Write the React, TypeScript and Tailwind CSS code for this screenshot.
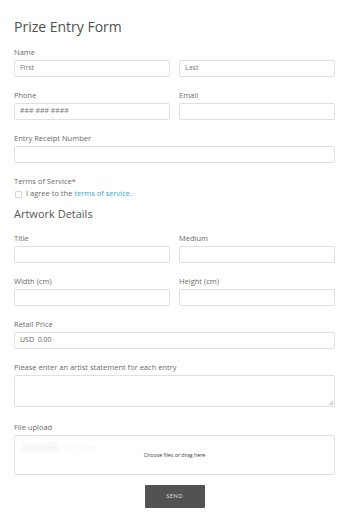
import React from "react";

const font = { fontFamily: '"Open Sans", "Noto Sans", sans-serif' };

function Label({ children }: { children: React.ReactNode }) {
  return <div className="text-[7.5px] leading-[10px] text-[#6a6a6a] mb-[3px]">{children}</div>;
}

function Input({ placeholder }: { placeholder?: string }) {
  return (
    <div className="h-[17px] border border-[#e0e0e0] rounded-[2px] bg-white flex items-center px-[5px] text-[7px] text-[#7a7a7a]">
      {placeholder}
    </div>
  );
}

function Field({ label, placeholder }: { label?: string; placeholder?: string }) {
  return (
    <div className="mb-[13px]">
      <Label>{label ?? "\u00a0"}</Label>
      <Input placeholder={placeholder} />
    </div>
  );
}

export default function App() {
  return (
    <div className="w-[350px] h-[523px] bg-white pl-[14px] pr-[15px] pt-[17px]" style={font}>
      <h1 className="text-[14px] leading-[20px] text-[#505050] mb-[10px]">Prize Entry Form</h1>

      <div className="grid grid-cols-2 gap-x-[9px]">
        <Field label="Name" placeholder="First" />
        <Field placeholder="Last" />
        <Field label="Phone" placeholder="### ### ####" />
        <Field label="Email" />
      </div>
      <Field label="Entry Receipt Number" />

      <div className="text-[7.5px] leading-[10px] text-[#6a6a6a] mb-[3px]">
        Terms of Service<span className="text-[#e03030]">*</span>
      </div>
      <div className="flex items-center h-[10px] text-[7.5px] text-[#6a6a6a]">
        <span className="w-[7px] h-[7px] border border-[#d4d4d4] rounded-[1px] mr-[4px] ml-[1px]" />
        <span>
          I agree to the <span className="text-[#3aa3cc]">terms of service.</span>
        </span>
      </div>

      <h2 className="text-[11px] leading-[16px] text-[#555] mt-[7px] mb-[11px]">Artwork Details</h2>

      <div className="grid grid-cols-2 gap-x-[9px]">
        <Field label="Title" />
        <Field label="Medium" />
        <Field label="Width (cm)" />
        <Field label="Height (cm)" />
      </div>

      <div className="mb-[13px]">
        <Label>Retail Price</Label>
        <div className="h-[17px] border border-[#e0e0e0] rounded-[2px] flex items-center px-[5px] text-[7px] text-[#666]">
          USD&nbsp;&nbsp;0.00
        </div>
      </div>

      <div className="mb-[15px]">
        <Label>Please enter an artist statement for each entry</Label>
        <div className="relative h-[32px] border border-[#e0e0e0] rounded-[2px]">
          <svg className="absolute right-[1px] bottom-[1px]" width="5" height="5" viewBox="0 0 5 5">
            <path d="M5 0 L0 5 H5 Z" fill="#d6d6d6" />
          </svg>
        </div>
      </div>

      <div className="mb-[10px]">
        <Label>File upload</Label>
        <div className="relative h-[40px] border border-[#e0e0e0] rounded-[2px] flex items-center justify-center">
          <div className="absolute left-[6px] top-[6px] text-[5.5px] text-[#f3f3f3] flex items-center gap-[3px]">
            <span className="bg-[#fafafa] px-[3px] py-[1px]">Choose Files</span>
            <span>No file chosen</span>
          </div>
          <span className="text-[5.5px] text-[#444] tracking-[-0.1px]">Choose files or drag here</span>
        </div>
      </div>

      <div className="flex justify-center">
        <div className="w-[60px] h-[23px] bg-[#525252] rounded-[1px] flex items-center justify-center text-[6px] text-[#ddd] tracking-[0.3px]">
          SEND
        </div>
      </div>
    </div>
  );
}
